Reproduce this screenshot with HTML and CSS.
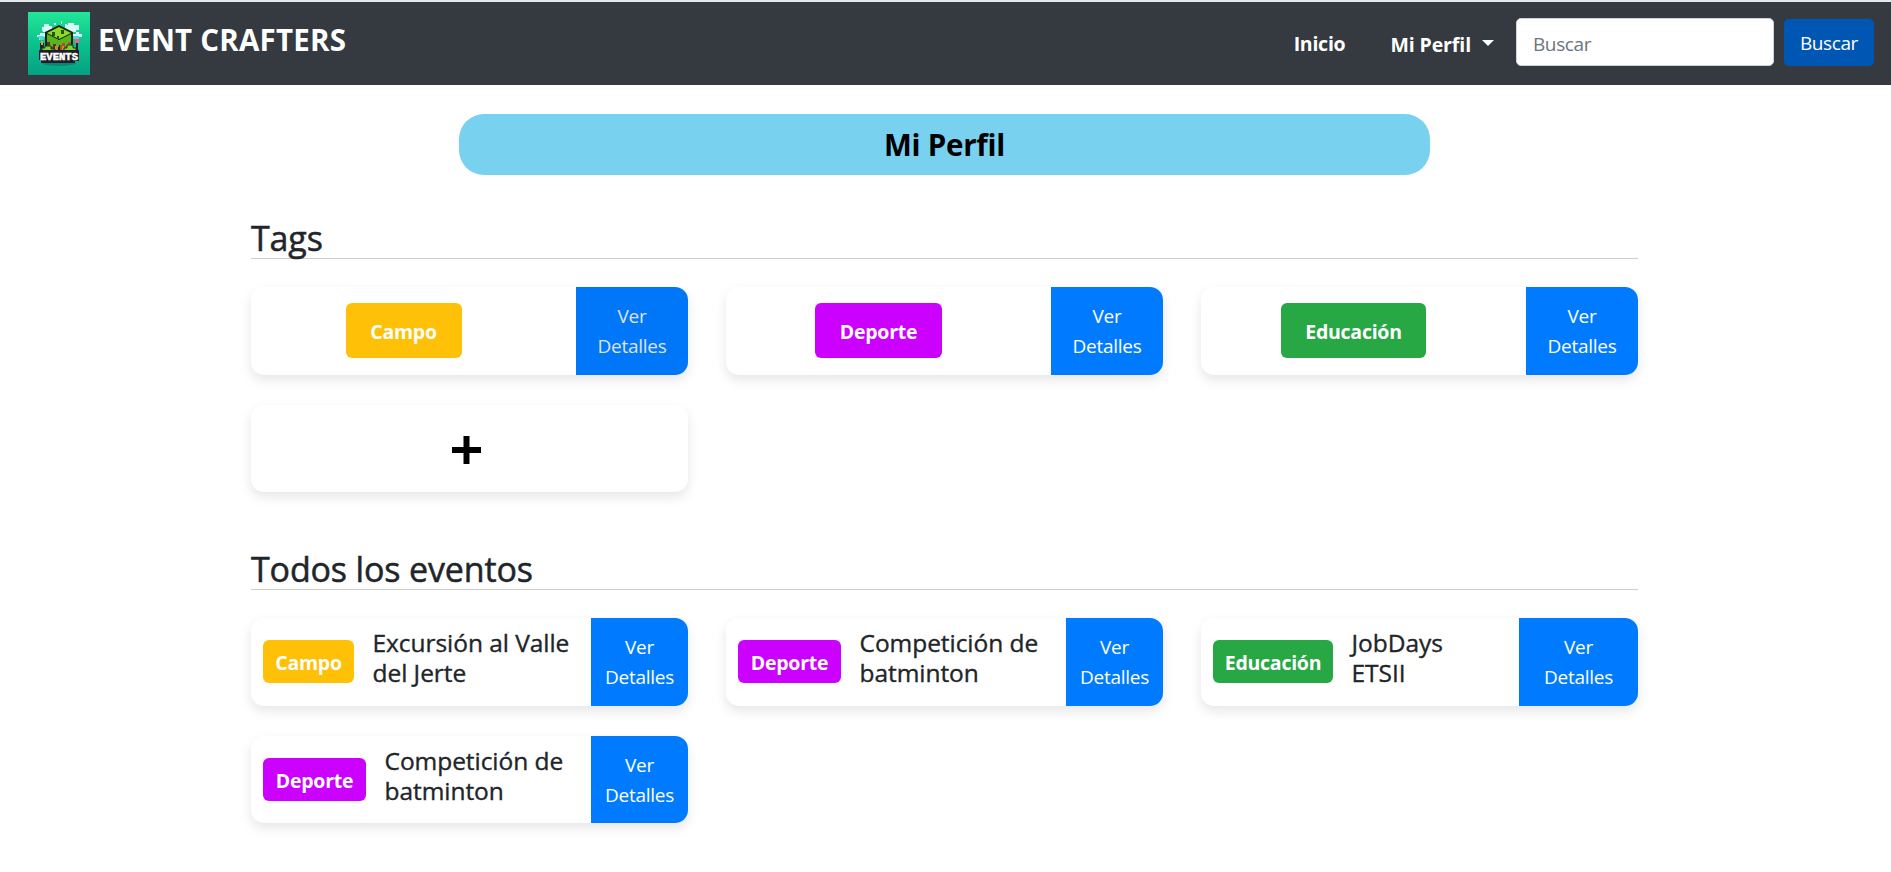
FILE: index.html
```html
<!DOCTYPE html>
<html lang="es">
<head>
<meta charset="utf-8">
<title>Event Crafters</title>
<link rel="stylesheet" href="styles.css">
</head>
<body>
<nav class="navbar">
  <a class="brand">
    <svg class="logo" viewBox="0 0 62 63">
      <defs>
        <linearGradient id="bg" x1="0" y1="0" x2="0" y2="1"><stop offset="0" stop-color="#22e697"/><stop offset=".5" stop-color="#0cc18c"/><stop offset="1" stop-color="#04a184"/></linearGradient>
      </defs>
      <rect width="62" height="63" fill="url(#bg)"/>
      <ellipse cx="31" cy="51" rx="17" ry="3" fill="#08896f"/>
      <path d="M14 18v-3h2v-3h5v2h3v4h-3v2h-6zM37 16v-3h3v-2h6v2h5v5h-3v2h-9zM9 25v-2h3v-2h5v4h-3v3h-3v-3zM45 25v-3h3v-2h3v2h3v3h-4v3h-3v-3z" fill="#d7fbf5"/>
      <path d="M10 24h6v4h-4zM44 24h7v3h-5z" fill="#58d4d5"/>
      <path d="M33 9h1v3h-1zM26 11h2v2h-2zM37 12h2v2h-2z" fill="#d7fbf5"/>
      <path d="M17 20l14-7 14 7v16l-14 8-14-8z" fill="#12241c"/>
      <path d="M19 21l12-6 12 6-12 6z" fill="#91da24"/>
      <path d="M19 23l11 6v13l-11-6z" fill="#5d321e"/>
      <path d="M43 23l-11 6v13l11-6z" fill="#a85428"/>
      <path d="M19 22l12 6v7h-3v-3h-3v3h-3v-5h-3zM43 22l-12 6v5h3v-2h3v3h3v-4h3z" fill="#59b51d"/>
      <path d="M24 20h3v4h-3zM33 18h3v4h-3zM29 24h2v3h-2z" fill="#25550f"/>
      <path d="M27 34h3v7h-3zM34 34h2v4h-2z" fill="#df7d3a"/>
      <path d="M12 31h4v9h-4zM48 31h2v9h-2z" fill="#27222b"/>
      <path d="M13 29h2v4h-2z" fill="#ed9c32"/>
      <path d="M47 27h4v4h-4z" fill="#f35d91"/>
      <path d="M14 39v-3h3v-2h6v3h4v3zM36 39v-3h3v-3h6v3h3v4z" fill="#7bd42b" stroke="#143b24"/>
      <path d="M11 38h40v11h-4v2H13v-3h-2z" fill="#211c29"/>
      <text class="logo-text" x="12" y="48" textLength="38" lengthAdjust="spacingAndGlyphs">EVENTS</text>
    </svg>
    <span class="brand-name">EVENT CRAFTERS</span>
  </a>
  <div class="nav-right">
    <a class="nav-link">Inicio</a>
    <a class="nav-link dropdown">Mi Perfil</a>
    <form class="search">
      <input class="search-input" type="text" placeholder="Buscar">
      <button class="search-btn" type="button">Buscar</button>
    </form>
  </div>
</nav>
<h1 class="banner">Mi Perfil</h1>
<main class="content">
  <section class="section tags">
    <h2 class="heading">Tags</h2>
    <div class="grid">
      <article class="card"><div class="card-main"><span class="badge campo">Campo</span></div><a class="details hover">Ver<br>Detalles</a></article>
      <article class="card"><div class="card-main"><span class="badge deporte">Deporte</span></div><a class="details">Ver<br>Detalles</a></article>
      <article class="card"><div class="card-main"><span class="badge educacion">Educación</span></div><a class="details">Ver<br>Detalles</a></article>
      <article class="card add">
        <svg class="plus" viewBox="0 0 29 28"><path d="M11.500 0h6v11H29v6H17.500v11h-6V17H0v-6h11.500z"/></svg>
      </article>
    </div>
  </section>
  <section class="section events">
    <h2 class="heading">Todos los eventos</h2>
    <div class="grid">
      <article class="card"><div class="card-main"><span class="badge campo">Campo</span><h3 class="title">Excursión al Valle<br>del Jerte</h3></div><a class="details">Ver<br>Detalles</a></article>
      <article class="card"><div class="card-main"><span class="badge deporte">Deporte</span><h3 class="title">Competición de<br>batminton</h3></div><a class="details">Ver<br>Detalles</a></article>
      <article class="card"><div class="card-main"><span class="badge educacion">Educación</span><h3 class="title">JobDays<br>ETSII</h3></div><a class="details wide">Ver<br>Detalles</a></article>
      <article class="card"><div class="card-main"><span class="badge deporte">Deporte</span><h3 class="title">Competición de<br>batminton</h3></div><a class="details">Ver<br>Detalles</a></article>
    </div>
  </section>
</main>
</body>
</html>
```
FILE: styles.css
```css
* { box-sizing: border-box; }
body {
  margin: 0;
  background: #fff;
  color: #212529;
  font-family: "Open Sans", "Noto Sans", sans-serif;
  font-size: 19px;
  line-height: 30px;
  letter-spacing: -0.25px;
}
h1, h2, h3 { margin: 0; }

.navbar {
  display: flex;
  align-items: flex-start;
  justify-content: space-between;
  height: 85px;
  padding: 10px 17px 0 28px;
  background: #343a40;
  border-top: 2px solid #e4e8ea;
  color: #fff;
}
.brand { display: flex; gap: 8px; }
.logo { display: block; width: 62px; height: 63px; }
.logo-text { font: 900 10px "Liberation Mono", monospace; fill: #fff; stroke: #fff; stroke-width: 0.5px; letter-spacing: 0; }
.brand-name { padding-top: 8px; font-size: 29.5px; font-weight: 700; line-height: 40px; letter-spacing: 0.22px; }
.nav-right { display: flex; padding-top: 6px; }
.nav-link { margin-right: 45px; padding-top: 11px; font-size: 19.5px; font-weight: 700; }
.dropdown { display: flex; align-items: center; gap: 11px; height: 42px; margin-right: 22px; letter-spacing: -0.1px; }
.dropdown::after {
  content: "";
  margin-top: -4px;
  border: 6px solid transparent;
  border-top-color: #fff;
  border-bottom: 0;
}
.search { display: flex; gap: 10px; }
.search-input {
  width: 258px;
  height: 48px;
  padding: 4px 16px 0;
  border: 1px solid #ced4da;
  border-radius: 5px;
  background: #fff;
  font: inherit;
  letter-spacing: -0.4px;
}
.search-input::placeholder { color: #6c757d; opacity: 1; }
.search-btn {
  width: 90px;
  height: 47px;
  margin-top: 1px;
  padding: 0;
  border: 0;
  border-radius: 5px;
  background: #0056b3;
  color: #fff;
  font: inherit;
  letter-spacing: -0.4px;
}

.banner {
  width: 971px;
  height: 61px;
  margin: 29px auto 0 459px;
  border-radius: 25px;
  background: #78d1ef;
  color: #000;
  font-size: 29.5px;
  font-weight: 700;
  line-height: 62px;
  text-align: center;
}

.content { width: 1387px; margin: 0 auto 0 251px; padding-bottom: 48px; }
.tags { padding-top: 41px; }
.events { padding-top: 55px; }
.heading {
  height: 43px;
  border-bottom: 1px solid #ccc;
  font-size: 34px;
  font-weight: 500;
  line-height: 44px;
  letter-spacing: -0.15px;
  -webkit-text-stroke: 0.5px;
}
.grid {
  display: grid;
  grid-template-columns: repeat(3, 437px);
  gap: 30px 38px;
  padding-top: 28px;
}
.card {
  display: flex;
  height: 87.5px;
  overflow: hidden;
  border-radius: 13px;
  background: #fff;
  box-shadow: 0 5px 12px rgba(0, 0, 0, 0.1);
}
.card-main { display: flex; flex: 1; align-items: center; }
.tags .card-main { justify-content: center; padding-right: 20px; }
.events .card-main { padding-left: 12px; }
.badge {
  border-radius: 6px;
  color: #fff;
  font-size: 19.5px;
  font-weight: 700;
  text-align: center;
}
.campo { background: #ffc107; width: 91px; }
.deporte { background: #cc00ff; width: 103px; }
.educacion { background: #28a745; width: 120px; }
.badge { height: 43px; line-height: 45px; }
.tags .badge { height: 55px; line-height: 57px; }
.tags .campo { width: 116px; }
.tags .deporte { width: 127px; }
.tags .educacion { width: 145px; }
.title {
  margin: -7px 0 0 18.5px;
  font-size: 24.5px;
  font-weight: 500;
  letter-spacing: -0.05px;
  -webkit-text-stroke: 0.35px;
}
.details {
  display: flex;
  align-items: center;
  justify-content: center;
  width: 112px;
  padding-top: 1px;
  background: #007bff;
  color: #fff;
  text-align: center;
}
.details.hover { background: #0077f8; color: #dfe3e8; }
.events .details { width: 97px; }
.events .details.wide { width: 119px; }
.add { align-items: center; padding: 3px 0 0 201px; }
.plus { width: 29px; height: 28px; }
```
